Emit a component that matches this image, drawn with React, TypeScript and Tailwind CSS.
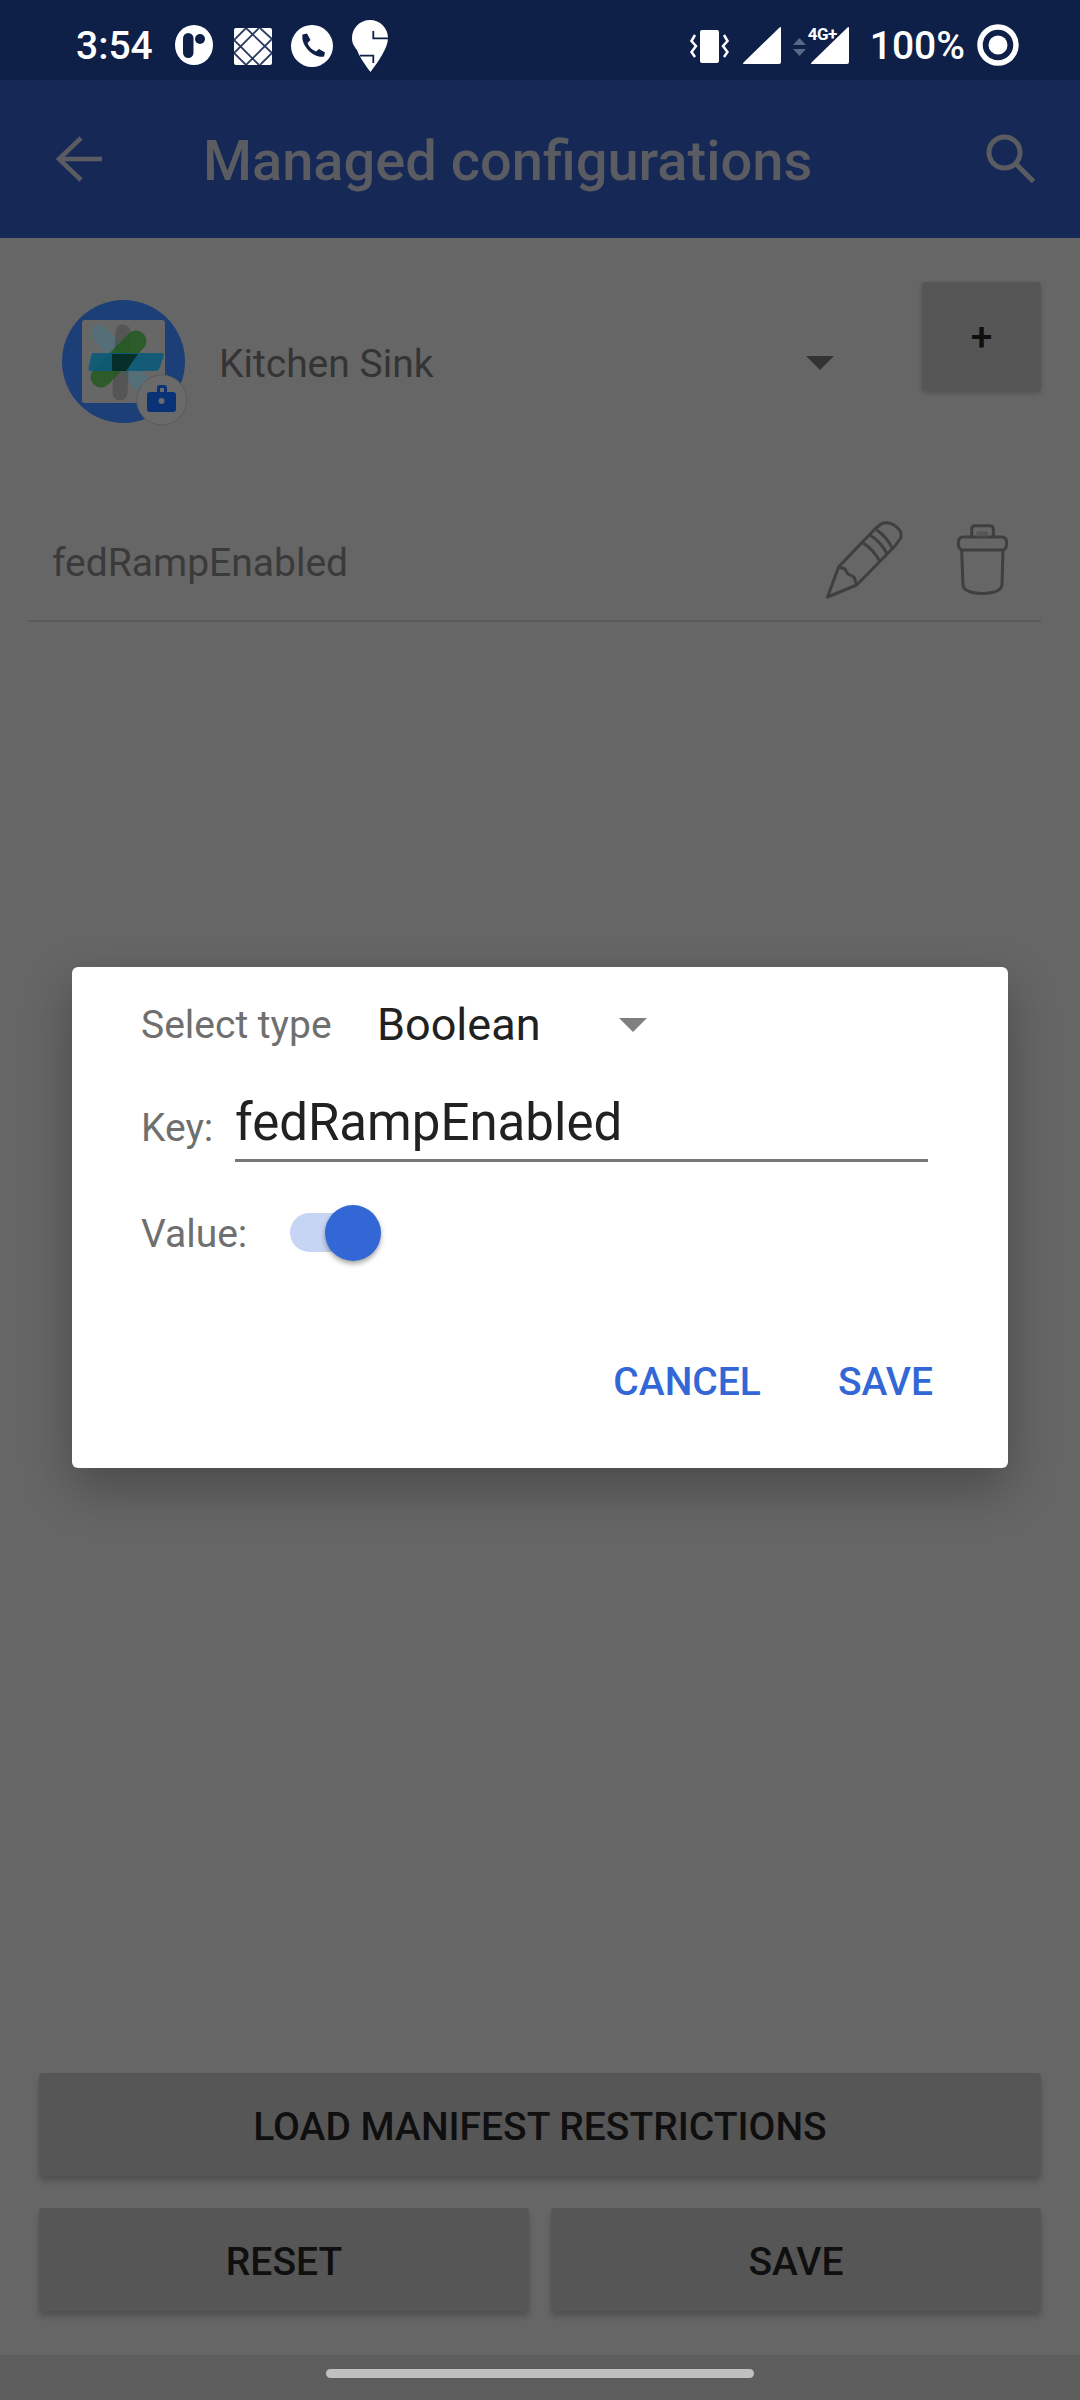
const font = { fontFamily: "Roboto, sans-serif" };

const Caret = ({ className }: { className: string }) => (
  <svg width="28" height="14" viewBox="0 0 28 14" className={className}>
    <path d="M0 0H28L14 14Z" />
  </svg>
);

const StatusLeftIcons = () => (
  <>
    <svg width="38" height="40" viewBox="0 0 38 40" className="ml-[24px] mt-[1px] shrink-0">
      <ellipse cx="19" cy="20" rx="19" ry="20" fill="#fff" />
      <rect x="8" y="8" width="10.5" height="25" rx="5.25" fill="#0e2048" />
      <circle cx="25" cy="14" r="5" fill="#0e2048" />
    </svg>
    <svg width="38" height="37" viewBox="0 0 38 37" className="ml-[21px] mt-[4px] shrink-0">
      <rect x="0" y="0" width="38" height="37" rx="2" fill="#fff" />
      <path d="M0 12 L12 0 M0 25 L25 0 M12 37 L38 11 M26 37 L38 25 M12 0 L38 25 M0 12 L25 37 M0 25 L12 37 M26 0 L38 11" stroke="#2b3a63" strokeWidth="1.8" fill="none" />
    </svg>
    <svg width="42" height="42" viewBox="0 0 42 42" className="ml-[19px] mt-[1px] shrink-0">
      <circle cx="21" cy="21" r="21" fill="#fff" />
      <path d="M11.5 9.5 L16 8.5 L19.5 15 L16.5 18 C18 22 21 25 25 26.5 L28 24 L34 27.5 L33 31.5 C24.5 34 9.5 22 11.5 9.5Z" fill="#0e2048" />
    </svg>
    <svg width="37" height="54" viewBox="0 0 37 54" className="ml-[19px] -mt-[4px] shrink-0">
      <path d="M18 0 C28 0 36 8 36 18 C36 28 26 42 18.5 52 C14 46 8 38 5 30 C1 25 0 22 0 18 C0 8 8 0 18 0Z" fill="#fff" />
      <path d="M21.3 11 V18.3 H37 M8 35.7 H21.3 V43" stroke="#0e2048" strokeWidth="1.8" fill="none" />
    </svg>
  </>
);

const SignalTriangle = () => (
  <svg width="38" height="37" viewBox="0 0 38 37">
    <path d="M38 1 V35 Q38 37 36 37 H1 Q-1 37 1 35 L36 1 Q38 -1 38 1Z" fill="#fff" />
  </svg>
);

const StatusRightIcons = () => (
  <>
    <svg width="39" height="36" viewBox="0 0 39 36" className="mt-[6px] shrink-0">
      <rect x="10" y="0" width="19" height="33" rx="2" fill="#fff" />
      <path d="M5 5 L1.5 11 L6 16 L1.5 22 L5 27 M34 5 L37.5 11 L33 16 L37.5 22 L34 27" stroke="#fff" strokeWidth="2.5" fill="none" />
    </svg>
    <div className="ml-[14px] mt-[3px] shrink-0"><SignalTriangle /></div>
    <svg width="13" height="18" viewBox="0 0 13 18" className="ml-[12px] mt-[14px] shrink-0">
      <path d="M6.5 0 L13 7 H0Z M0 11 H13 L6.5 18Z" fill="#5a6785" />
    </svg>
    <div className="relative ml-[5px] mt-[3px] w-[38px] h-[37px] shrink-0">
      <SignalTriangle />
      <span className="absolute -left-[3px] -top-[3px] text-[17px] leading-[20px] font-bold text-white tracking-[-0.5px]">4G+</span>
    </div>
  </>
);

const Avatar = () => (
  <svg width="130" height="130" viewBox="60 298 130 130" className="shrink-0 self-start mt-[16px]">
    <circle cx="123.5" cy="361.5" r="61.5" fill="#1d3f78" />
    <rect x="82" y="320" width="83" height="83" rx="3" fill="#676767" />
    <g fill="none" strokeLinecap="round">
      <path d="M100 333 L143 385" stroke="#4d737f" strokeWidth="17" opacity="0.7" />
      <path d="M123 332 L120 393" stroke="#4a4a4a" strokeWidth="15" opacity="0.6" />
      <path d="M136 341 L101 377" stroke="#1f5a1c" strokeWidth="21" opacity="0.8" />
    </g>
    <path d="M93 353 H162 Q165 353 163 358 L160 367 Q159 371 155 371 H91 Q87 371 89 366 L91 356 Q92 353 93 353Z" fill="#0a5a78" opacity="0.9" />
    <path d="M112 354 H138 L126 371 H112Z" fill="#062a22" opacity="0.9" />
    <circle cx="161.7" cy="400" r="25" fill="#6a6a6a" stroke="#5b5b5b" strokeWidth="1" />
    <path d="M157 392 V388 Q157 385 160 385 H164 Q167 385 167 388 V392 H173 Q176 392 176 395 V409 Q176 412 173 412 H150 Q147 412 147 409 V395 Q147 392 150 392Z M160 392 H164 V388 H160Z" fill="#0a3377" fillRule="evenodd" />
    <circle cx="161.5" cy="401" r="3" fill="#6a6a6a" />
  </svg>
);

const Pencil = () => (
  <svg width="80" height="80" viewBox="0 0 80 80" fill="none" stroke="#3f3f3f" strokeWidth="3" strokeLinejoin="round" className="shrink-0">
    <path d="M3.5 77 L14.7 46.7 L51 9 L57 4 Q63 1 70 5 Q79 11 76.7 18 L71 26 L32.7 65Z" />
    <path d="M39.4 23.3 Q50 30 56 41.7 M46 15 Q57 22 62.7 33.3 M52.7 10 Q63 17 68 28" />
    <path d="M14.7 47 L21 49 L24 54 L30 57 L32.7 65" />
  </svg>
);

const Trash = () => (
  <svg width="55" height="76" viewBox="0 0 55 76" fill="none" stroke="#3f3f3f" strokeWidth="3" strokeLinejoin="round" className="shrink-0">
    <path d="M16.7 15 V7 Q16.7 3.7 20 3.7 H35 Q38.3 3.7 38.3 7 V15" />
    <path d="M8 15 H47 Q51.7 15 51.7 21 Q51.7 28 47 28 H8 Q3.3 28 3.3 21 Q3.3 15 8 15Z" />
    <rect x="21.7" y="9.5" width="11" height="5" fill="#555" stroke="none" />
    <path d="M6.7 29 L8 63 Q9 71 27 71.5 Q46 71 47 63 L48 29" />
  </svg>
);

const GreyButton = ({ label, className }: { label: string; className: string }) => (
  <div className={`flex items-center justify-center bg-[#565656] rounded-[4px] shadow-[0_5px_6px_rgba(0,0,0,0.22)] ${className}`}>
    <span className="text-[39px] font-medium text-[#0f0f0f] leading-[46px] pt-[5px]">{label}</span>
  </div>
);

const App = () => {
  return (
    <div style={font} className="relative w-[1080px] h-[2400px] flex flex-col bg-[#666666] overflow-hidden">
      {/* status bar */}
      <div className="flex flex-row items-start h-[80px] bg-[#0e2048] pl-[76px] pt-[24px] shrink-0">
        <span className="text-[39px] leading-[44px] font-medium text-white w-[75px] shrink-0">3:54</span>
        <StatusLeftIcons />
        <div className="flex-1" />
        <StatusRightIcons />
        <span className="ml-[21px] text-[39px] leading-[44px] font-medium text-white shrink-0">100%</span>
        <svg width="42" height="42" viewBox="0 0 42 42" className="ml-[12px] mr-[61px] shrink-0">
          <circle cx="21" cy="21" r="18" fill="none" stroke="#fff" strokeWidth="5.5" />
          <circle cx="21" cy="21" r="9.5" fill="#fff" />
        </svg>
      </div>

      {/* app bar */}
      <div className="flex flex-row items-center h-[158px] bg-[#162856] shrink-0">
        <svg width="46" height="46" viewBox="0 0 46 46" fill="none" stroke="#5a5c62" strokeWidth="4.5" className="ml-[56px] shrink-0">
          <path d="M46 23 H4 M25 2 L3 23 L25 44" />
        </svg>
        <span className="ml-[101px] pt-[4px] text-[56px] leading-[64px] font-medium text-[#5a5c62]">Managed configurations</span>
        <div className="flex-1" />
        <svg width="50" height="50" viewBox="0 0 50 50" fill="none" stroke="#5a5c62" strokeWidth="5" className="mr-[44px] shrink-0">
          <circle cx="18.5" cy="18.5" r="15.5" />
          <path d="M29.5 29.5 L47.5 47.5" />
        </svg>
      </div>

      {/* config picker */}
      <div className="flex flex-row items-start h-[109px] mt-[44px] pl-[60px] shrink-0">
        <Avatar />
        <span className="ml-[29px] mt-[59px] text-[39px] leading-[46px] text-[#343434]">Kitchen Sink</span>
        <div className="flex-1" />
        <Caret className="mt-[74px] mr-[88px] fill-[#333333]" />
        <div className="flex items-center justify-center w-[119px] h-[109px] mr-[39px] bg-[#565656] rounded-[4px] shadow-[0_2px_5px_rgba(0,0,0,0.2)]">
          <span className="text-[39px] leading-[42px] font-medium text-[#0f0f0f]">+</span>
        </div>
      </div>

      {/* restriction row */}
      <div className="flex flex-row items-center h-[102px] mt-[129px] ml-[28px] w-[1013px] pl-[24px] border-b-2 border-[#5a5a5a] shrink-0">
        <span className="text-[39px] leading-[46px] text-[#3a3a3a] -mt-[14px]">fedRampEnabled</span>
        <div className="flex-1" />
        <div className="-mt-[20px]"><Pencil /></div>
        <div className="ml-[51px] mr-[31px] -mt-[20px]"><Trash /></div>
      </div>

      <div className="flex-1" />

      {/* bottom actions */}
      <div className="flex flex-col gap-[32px] px-[39px] mb-[44px] shrink-0">
        <GreyButton label="LOAD MANIFEST RESTRICTIONS" className="w-full h-[103px]" />
        <div className="flex flex-row gap-[22px]">
          <GreyButton label="RESET" className="flex-1 h-[103px]" />
          <GreyButton label="SAVE" className="flex-1 h-[103px]" />
        </div>
      </div>

      {/* nav bar */}
      <div className="flex items-center justify-center h-[45px] bg-[#5d5d5d] shrink-0">
        <div className="w-[428px] h-[9px] rounded-full bg-[#c0c0c0] mt-[-9px]" />
      </div>

      {/* dialog */}
      <div className="absolute left-[72px] top-[967px] w-[936px] h-[501px] flex flex-col bg-white rounded-[6px] shadow-[0_20px_50px_rgba(0,0,0,0.28)]">
        <div className="flex flex-row items-center h-[60px] mt-[28px] pl-[69px]">
          <span className="w-[236px] text-[39px] leading-[44px] text-[#6f6f6f]">Select type</span>
          <span className="w-[242px] text-[45px] leading-[50px] text-[#212121]">Boolean</span>
          <Caret className="fill-[#7f7f7f]" />
        </div>
        <div className="flex flex-row items-end h-[107px] pl-[69px]">
          <span className="w-[94px] text-[39px] leading-[44px] text-[#6f6f6f] mb-[12px]">Key:</span>
          <div className="w-[693px] h-[72px] border-b-[3px] border-[#777777] pt-[3px]">
            <span className="text-[51px] leading-[60px] text-[#212121]">fedRampEnabled</span>
          </div>
        </div>
        <div className="flex flex-row items-center h-[60px] mt-[40px] pl-[69px]">
          <span className="w-[149px] pt-[4px] text-[39px] leading-[44px] text-[#6f6f6f]">Value:</span>
          <div className="relative w-[85px] h-[39px] rounded-full bg-[#c6d5f3]">
            <div className="absolute left-[35px] -top-[8px] w-[56px] h-[56px] rounded-full bg-[#3367d6] shadow-[0_3px_5px_rgba(0,0,0,0.35)]" />
          </div>
        </div>
        <div className="flex flex-row justify-end items-center gap-[77px] mt-[98px] pr-[75px]">
          <span className="text-[39px] leading-[44px] font-medium text-[#3367d6]">CANCEL</span>
          <span className="text-[39px] leading-[44px] font-medium text-[#3367d6]">SAVE</span>
        </div>
      </div>
    </div>
  );
};

export default App;
